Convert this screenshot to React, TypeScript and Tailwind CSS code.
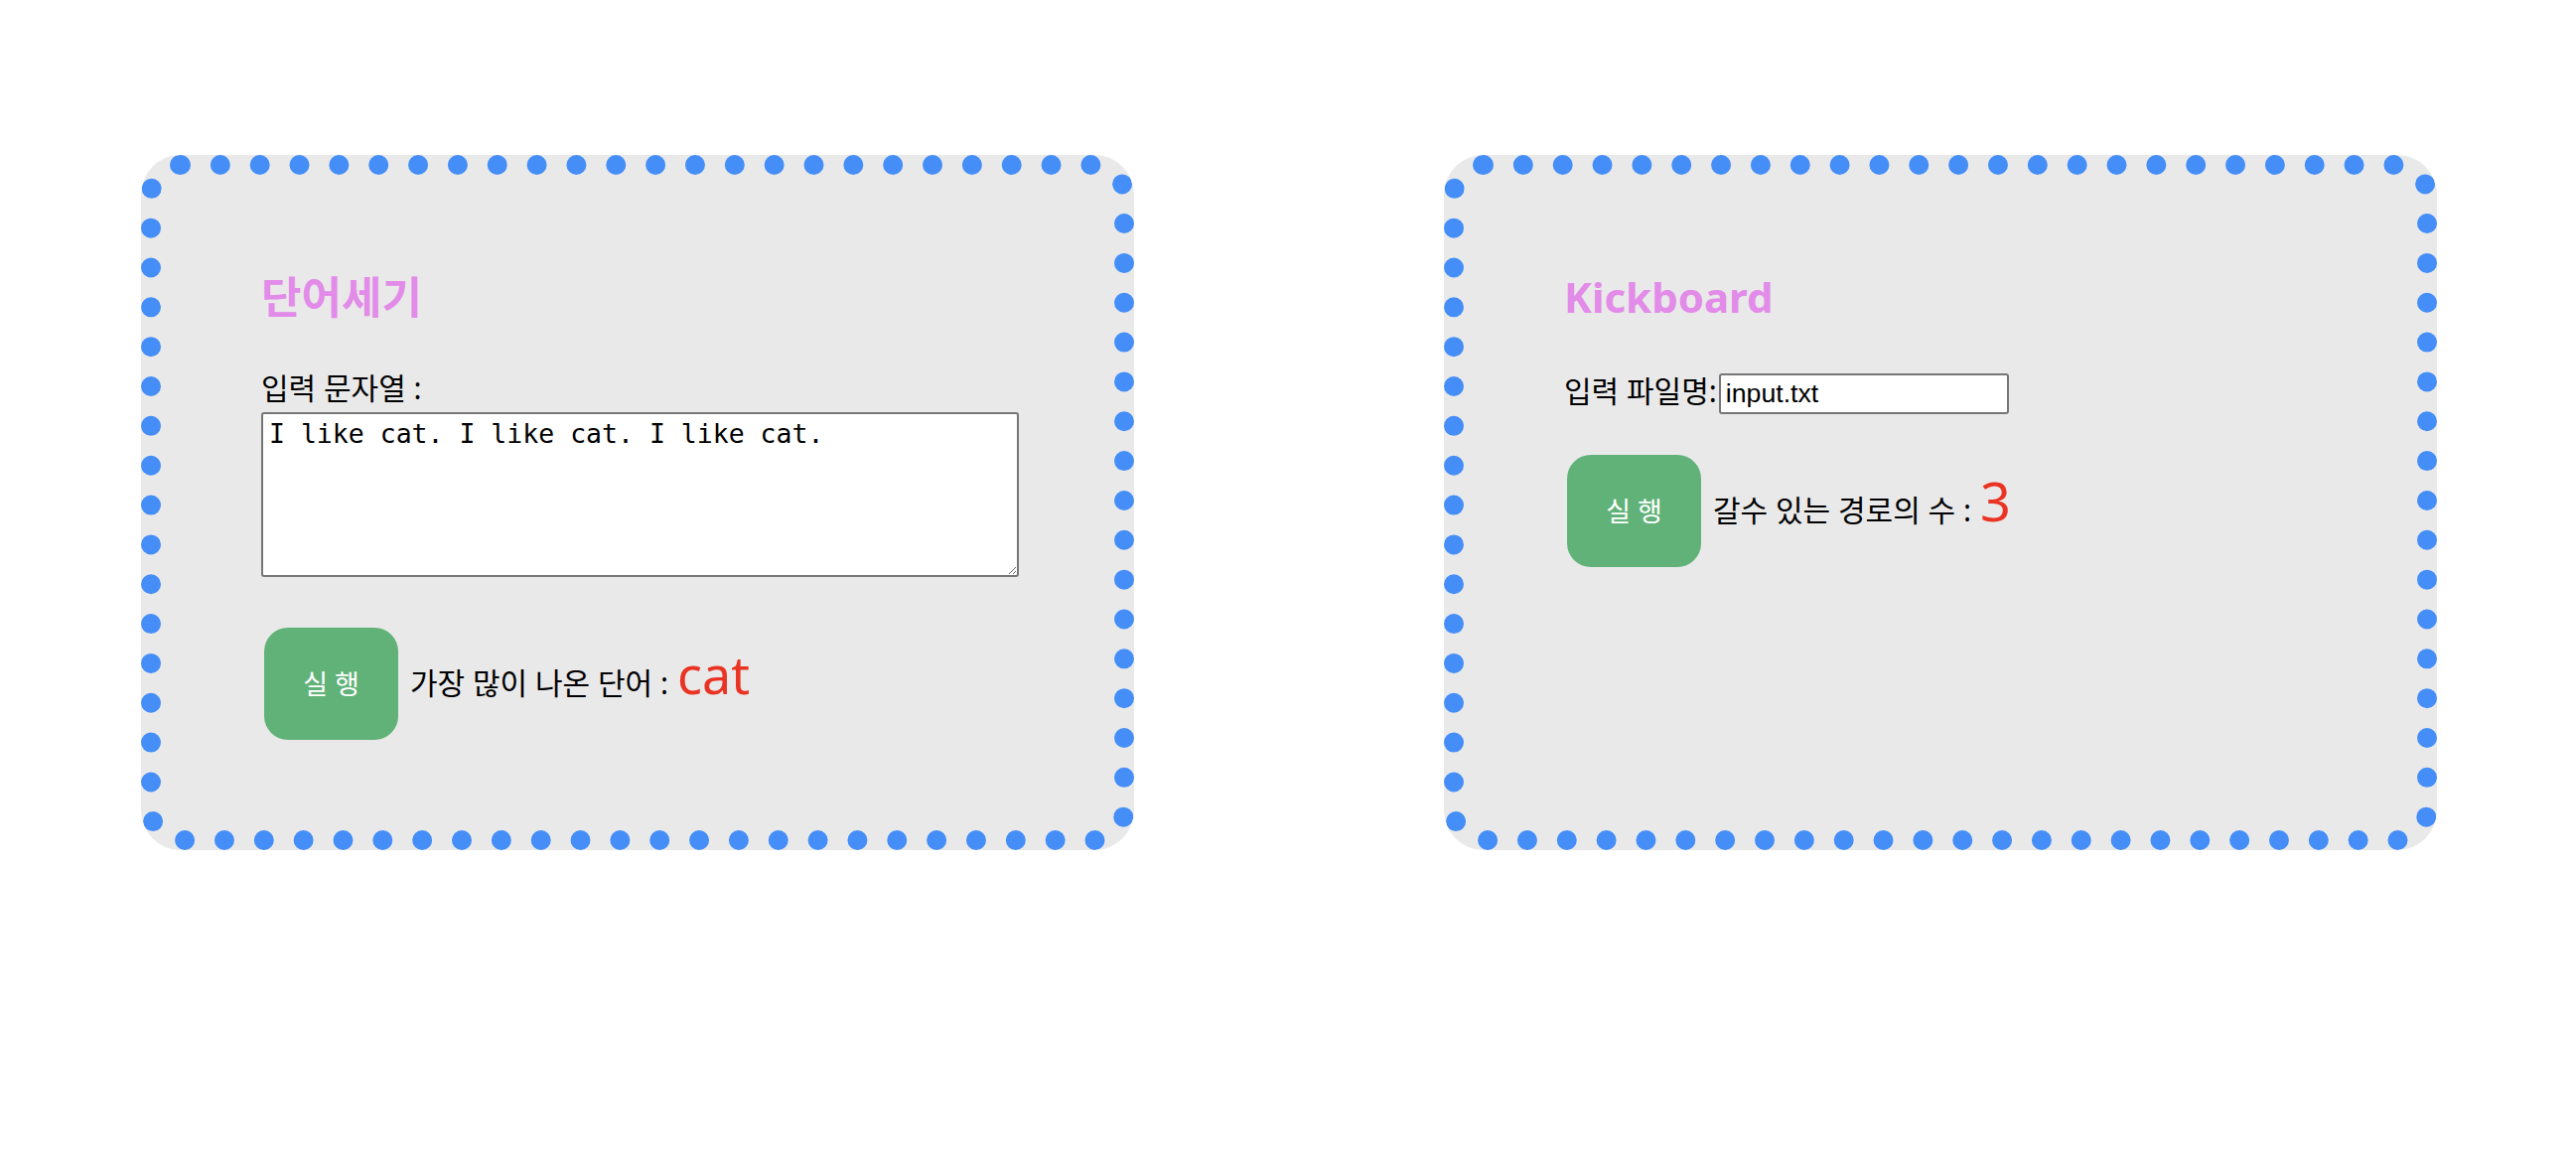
import { useState } from 'react';

const FONT = "font-['Noto_Sans','Noto_Sans_CJK_KR',sans-serif]";

function Card({ children }: { children: React.ReactNode }) {
  return (
    <div className="w-[1000px] h-[700px] shrink-0 rounded-[40px] border-[20px] border-dotted border-[#458ef7] bg-[#e9e9e9] pl-[101px] pt-[102px]">
      {children}
    </div>
  );
}

function RunButton() {
  return (
    <button className="ml-[3px] w-[135px] h-[113px] shrink-0 rounded-[24px] bg-[#60b278] text-white text-[27px] leading-none">
      실 행
    </button>
  );
}

export default function App() {
  const [text, setText] = useState('I like cat. I like cat. I like cat.');
  const [file, setFile] = useState('input.txt');

  return (
    <div className={`${FONT} min-h-[1164px] bg-white text-black`}>
      <div className="flex gap-[312px] pl-[142px] pt-[156px]">
        {/* 단어세기 */}
        <Card>
          <h1 className="text-[44px] leading-[42px] font-bold text-[#e28be8]">단어세기</h1>
          <div className="mt-[56px] text-[30px] leading-[30px]">입력 문자열 :</div>
          <textarea
            value={text}
            onChange={(e) => setText(e.target.value)}
            className="mt-[9px] block w-[763px] h-[166px] rounded-[3px] border-2 border-[#767676] bg-white px-[6px] py-[4px] font-['DejaVu_Sans_Mono',monospace] text-[26.5px] leading-[31px]"
          />
          <div className="mt-[51px] flex items-baseline">
            <RunButton />
            <span className="ml-[12px] text-[30px]">가장 많이 나온 단어 :</span>
            <span className="ml-[9px] text-[52px] leading-none text-[#ea3323]">cat</span>
          </div>
        </Card>

        {/* Kickboard */}
        <Card>
          <h1 className="text-[42px] leading-[42px] font-bold text-[#e28be8]">Kickboard</h1>
          <div className="mt-[56px] flex items-baseline">
            <span className="text-[30px] leading-[30px]">입력 파일명:</span>
            <input
              value={file}
              onChange={(e) => setFile(e.target.value)}
              className="ml-[2px] w-[292px] h-[41px] rounded-[3px] border-2 border-[#767676] bg-white px-[5px] font-['Liberation_Sans',sans-serif] text-[26.67px]"
            />
          </div>
          <div className="mt-[41px] flex items-baseline">
            <RunButton />
            <span className="ml-[12px] text-[30px]">갈수 있는 경로의 수 :</span>
            <span className="ml-[9px] text-[54px] leading-none text-[#ea3323]">3</span>
          </div>
        </Card>
      </div>
    </div>
  );
}
